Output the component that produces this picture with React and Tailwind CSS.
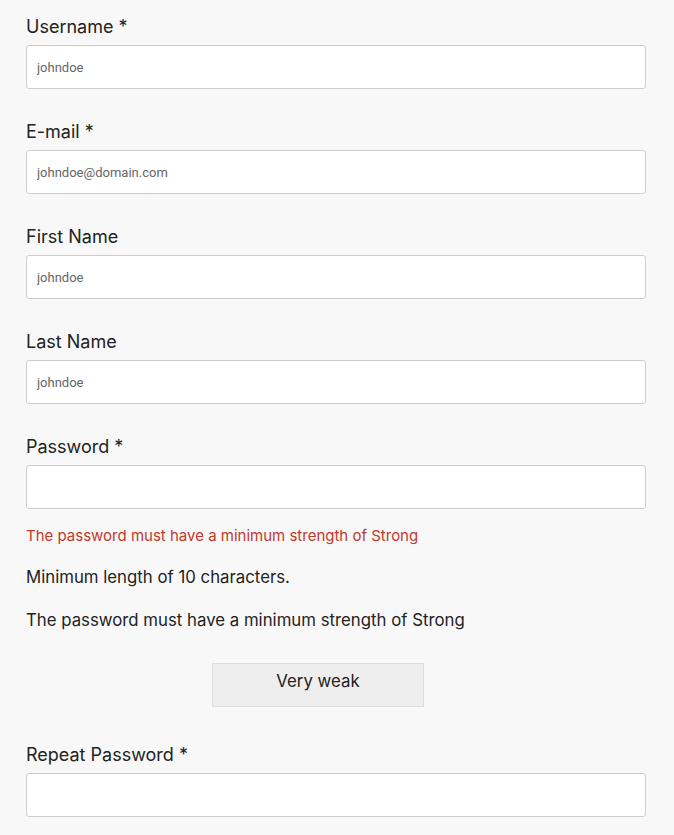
const LABEL = "block text-[18px] leading-6 text-[#222] mb-[6px]";
const INPUT =
  "block w-full h-[44px] bg-white border border-[#cccccc] rounded-[3px] px-[10px] text-[13px] text-[#555] placeholder:text-[#666] outline-none";

function Field({ label, required, placeholder, type = "text" }) {
  return (
    <div className="mb-[31px]">
      <label className={LABEL}>
        {label}
        {required && " *"}
      </label>
      <input
        type={type}
        placeholder={placeholder}
        className={INPUT}
        style={{ fontFamily: "Roboto, sans-serif" }}
      />
    </div>
  );
}

export default function App() {
  return (
    <div
      className="min-h-[835px] bg-[#f8f8f8] pl-[26px] pr-[28px] pt-[15px]"
      style={{ fontFamily: "Inter, 'Noto Sans', sans-serif" }}
    >
      <Field label="Username" required placeholder="johndoe" />
      <Field label="E-mail" required placeholder="johndoe@domain.com" />
      <Field label="First Name" placeholder="johndoe" />
      <Field label="Last Name" placeholder="johndoe" />

      <div>
        <label className={LABEL}>Password *</label>
        <input type="password" className={INPUT} />
        <div className="mt-[17px] text-[15px] leading-5 text-[#c0392b]">
          The password must have a minimum strength of Strong
        </div>
        <div className="mt-[21px] text-[16.8px] leading-5 text-[#222]">
          Minimum length of 10 characters.
        </div>
        <div className="mt-[23px] text-[16.8px] leading-5 text-[#222]">
          The password must have a minimum strength of Strong
        </div>
        <div className="flex justify-center mt-[33px] pr-[36px]">
          <div className="w-[212px] h-[44px] bg-[#eeeeee] border border-[#dddddd] flex items-start justify-center pt-[5px] text-[16.8px] text-[#222]">
            Very weak
          </div>
        </div>
      </div>

      <div className="mt-[36px]">
        <label className={LABEL}>Repeat Password *</label>
        <input type="password" className={INPUT} />
      </div>
    </div>
  );
}
